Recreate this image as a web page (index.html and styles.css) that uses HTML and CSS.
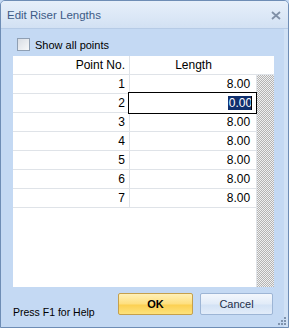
FILE: index.html
```html
<!DOCTYPE html>
<html>
  <head>
    <meta name="viewport" content="width=device-width, initial-scale=1.0">
    <title>Edit Riser Lengths</title>
    <link rel="stylesheet" href="styles.css">
  </head>
  <body>
    <div class="window">
      <div class="titlebar">
        <span class="title">Edit Riser Lengths</span>
        <svg class="close" width="10" height="9" viewBox="0 0 10 9">
          <path d="M1 1 L9 8 M9 1 L1 8" stroke="#8090a6" stroke-width="1.8" fill="none"/>
        </svg>
      </div>

      <div class="content">
        <label class="check">
          <span class="box"></span>
          <span>Show all points</span>
        </label>

        <div class="grid">
          <div class="grid-head">
            <div class="c1">Point No.</div>
            <div class="c2 center">Length</div>
            <div class="head-pad"></div>
          </div>
          <div class="grid-body">
            <div class="rows">
              <div class="row"><div class="c1">1</div><div class="c2">8.00</div></div>
              <div class="row">
                <div class="c1">2</div>
                <div class="c2 editing">
                  <span class="editor"><span class="sel">0.00</span><span class="caret"></span></span>
                </div>
              </div>
              <div class="row"><div class="c1">3</div><div class="c2">8.00</div></div>
              <div class="row"><div class="c1">4</div><div class="c2">8.00</div></div>
              <div class="row"><div class="c1">5</div><div class="c2">8.00</div></div>
              <div class="row"><div class="c1">6</div><div class="c2">8.00</div></div>
              <div class="row"><div class="c1">7</div><div class="c2">8.00</div></div>
            </div>
            <div class="hatch"></div>
          </div>
        </div>

        <div class="footer">
          <span class="help">Press F1 for Help</span>
          <button class="btn ok">OK</button>
          <button class="btn cancel">Cancel</button>
        </div>

        <svg class="grip" width="9" height="9" viewBox="0 0 9 9">
          <rect x="7" y="1" width="2" height="2" fill="#7f93ad"/>
          <rect x="4" y="4" width="2" height="2" fill="#7f93ad"/>
          <rect x="7" y="4" width="2" height="2" fill="#7f93ad"/>
          <rect x="1" y="7" width="2" height="2" fill="#7f93ad"/>
          <rect x="4" y="7" width="2" height="2" fill="#7f93ad"/>
          <rect x="7" y="7" width="2" height="2" fill="#7f93ad"/>
        </svg>
      </div>
    </div>
  </body>
</html>
```

FILE: styles.css
```css
body {
  margin: 0;
  padding: 0;
  font-family: "Liberation Sans", Arial, sans-serif;
  background: #c4d9f3;
}
.window {
  width: 289px;
  height: 328px;
  box-sizing: border-box;
  border: 1px solid #6e8db5;
  border-radius: 5px 5px 0 0;
  background: #c4d9f3;
  display: flex;
  flex-direction: column;
  overflow: hidden;
}
.titlebar {
  height: 27px;
  flex: none;
  display: flex;
  align-items: center;
  justify-content: space-between;
  padding: 0 7px 0 6px;
  background: linear-gradient(#e6effa, #dbe7f6 60%, #d2e1f3);
  border-bottom: 1px solid #b6cbe6;
}
.title {
  font-size: 11.5px;
  color: #3d5b86;
  padding-top: 1px;
}
.close {
  margin-top: 1px;
}
.content {
  flex: 1;
  position: relative;
  padding: 0 14px 0 12px;
  box-shadow: inset -4px 0 0 #d0e1f5;
}
.check {
  display: flex;
  align-items: center;
  margin: 9px 0 0 4px;
  height: 13px;
  font-size: 11px;
  color: #000;
}
.box {
  width: 11px;
  height: 11px;
  border: 1px solid #8f9fb3;
  background: linear-gradient(135deg, #d8dde4, #f7f8fa);
  margin-right: 5px;
}
.grid {
  margin-top: 5px;
  width: 261px;
  height: 231px;
  background: #fff;
  font-size: 12px;
  color: #000;
  display: flex;
  flex-direction: column;
}
.grid-head {
  display: flex;
  height: 18px;
  flex: none;
  border-bottom: 1px solid #dfe3e8;
}
.head-pad {
  width: 17px;
}
.grid-body {
  flex: 1;
  display: flex;
}
.rows {
  width: 244px;
  border-right: 1px solid #dfe3e8;
}
.row {
  display: flex;
  height: 18px;
  border-bottom: 1px solid #dfe3e8;
}
.c1 {
  width: 112px;
  padding-right: 4px;
  text-align: right;
  border-right: 1px solid #dfe3e8;
  line-height: 18px;
}
.c2 {
  flex: 1;
  padding-right: 6px;
  text-align: right;
  line-height: 18px;
}
.c2.center {
  text-align: center;
  padding-right: 0;
}
.editing {
  position: relative;
}
.editor {
  position: absolute;
  left: -2px;
  right: -1px;
  top: -2px;
  height: 20px;
  border: 1px solid #000;
  background: #fff;
  display: flex;
  justify-content: flex-end;
  align-items: center;
  padding-right: 4px;
}
.sel {
  background: #10306e;
  color: #fff;
  line-height: 14px;
  padding: 0 0 0 1px;
}
.caret {
  width: 1px;
  height: 14px;
  margin-left: -1px;
  background: #000;
}
.hatch {
  width: 17px;
  background: repeating-conic-gradient(#b4b4b4 0 25%, #f0f0f0 0 50%) 0 0 / 2px 2px;
}
.footer {
  display: flex;
  align-items: flex-start;
  margin-top: 6px;
}
.help {
  flex: 1;
  font-size: 10.5px;
  margin-top: 13px;
}
.btn {
  height: 22px;
  margin: 0;
  padding: 0;
  font-family: "Liberation Sans", Arial, sans-serif;
  font-size: 11px;
  border-radius: 2px;
  cursor: pointer;
}
.ok {
  width: 75px;
  margin-right: 7px;
  font-weight: bold;
  color: #000;
  border: 1px solid #c5a04c;
  background: linear-gradient(#fff1b8, #fedf7e 50%, #fcd052 55%, #fde27c);
}
.cancel {
  width: 73px;
  margin-right: 1px;
  color: #1e2f4a;
  border: 1px solid #9db5d5;
  background: linear-gradient(#f3f7fd, #e1ebf8 50%, #d3e2f5 55%, #e2ecf9);
}
.grip {
  position: absolute;
  right: 2px;
  bottom: 2px;
}
```
